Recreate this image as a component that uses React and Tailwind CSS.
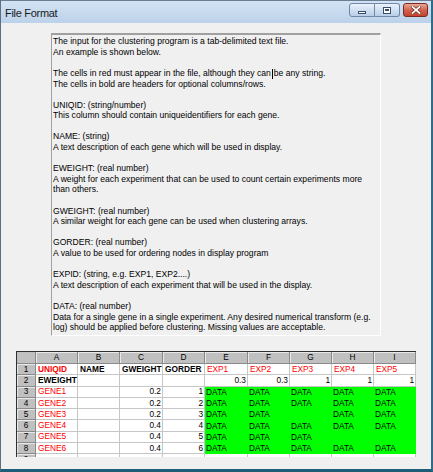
import React from "react";

const paragraphs = [
  ["The input for the clustering program is a tab-delimited text file.", "An example is shown below."],
  ["CURSOR", "The cells in bold are headers for optional columns/rows."],
  ["UNIQID: (string/number)", "This column should contain uniqueidentifiers for each gene."],
  ["NAME: (string)", "A text description of each gene which will be used in display."],
  ["EWEIGHT: (real number)", "A weight for each experiment that can be used to count certain experiments more", "than others."],
  ["GWEIGHT: (real number)", "A similar weight for each gene can be used when clustering arrays."],
  ["GORDER: (real number)", "A value to be used for ordering nodes in display program"],
  ["EXPID: (string, e.g. EXP1, EXP2....)", "A text description of each experiment that will be used in the display."],
  ["DATA: (real number)", "Data for a single gene in a single experiment. Any desired numerical transform (e.g.", "log) should be applied before clustering. Missing values are acceptable."],
];

const cols = ["A", "B", "C", "D", "E", "F", "G", "H", "I"];

// each cell: [text, kind] kind: r = red, rb = red bold, b = bold, n = number, d = data (green)
const rows = [
  [["UNIQID", "rb"], ["NAME", "b"], ["GWEIGHT", "b"], ["GORDER", "b"], ["EXP1", "r"], ["EXP2", "r"], ["EXP3", "r"], ["EXP4", "r"], ["EXP5", "r"]],
  [["EWEIGHT", "b"], ["", ""], ["", ""], ["", ""], ["0.3", "n"], ["0.3", "n"], ["1", "n"], ["1", "n"], ["1", "n"]],
  [["GENE1", "r"], ["", ""], ["0.2", "n"], ["1", "n"], ["DATA", "d"], ["DATA", "d"], ["DATA", "d"], ["DATA", "d"], ["DATA", "d"]],
  [["GENE2", "r"], ["", ""], ["0.2", "n"], ["2", "n"], ["DATA", "d"], ["DATA", "d"], ["DATA", "d"], ["DATA", "d"], ["DATA", "d"]],
  [["GENE3", "r"], ["", ""], ["0.2", "n"], ["3", "n"], ["DATA", "d"], ["DATA", "d"], ["", "d"], ["DATA", "d"], ["DATA", "d"]],
  [["GENE4", "r"], ["", ""], ["0.4", "n"], ["4", "n"], ["DATA", "d"], ["DATA", "d"], ["DATA", "d"], ["DATA", "d"], ["DATA", "d"]],
  [["GENE5", "r"], ["", ""], ["0.4", "n"], ["5", "n"], ["DATA", "d"], ["DATA", "d"], ["DATA", "d"], ["", "d"], ["", "d"]],
  [["GENE6", "r"], ["", ""], ["0.4", "n"], ["6", "n"], ["DATA", "d"], ["DATA", "d"], ["DATA", "d"], ["DATA", "d"], ["DATA", "d"]],
  [["", ""], ["", ""], ["", ""], ["", ""], ["", ""], ["", ""], ["", ""], ["", ""], ["", ""]],
];

function cellClass(kind) {
  if (kind === "d") return "bg-[#00ff00] text-black justify-start pl-[1px]";
  let c = "bg-white border-r border-b border-[#c6c6c6] ";
  if (kind === "n") return c + "justify-end pr-[1px] text-black";
  if (kind === "rb") return c + "justify-start pl-[2px] text-[#ff0000] font-bold";
  if (kind === "r") return c + "justify-start pl-[2px] text-[#ff0000]";
  if (kind === "b") return c + "justify-start pl-[2px] text-black font-bold";
  return c;
}

function Sheet() {
  return (
    <div className="ml-[15px] mt-[15px] w-[400px] h-[106px] overflow-hidden border-t border-l border-[#303030] bg-[#f0f0f0]">
      <div className="grid grid-cols-[19px_42px_42px_43px_42px_43px_42px_42px_42px_42px] grid-rows-[12px_repeat(9,11.25px)] text-[8.3px] leading-none font-['Liberation_Sans',Arial,sans-serif]">
        <div className="bg-[#c0c0c0] border-r border-b border-[#8a8a8a]"></div>
        {cols.map((c) => (
          <div key={c} className="bg-[#c0c0c0] border-r border-b border-[#8a8a8a] shadow-[inset_1px_1px_0_#e8e8e8] flex items-center justify-center text-black">
            {c}
          </div>
        ))}
        {rows.map((row, i) => (
          <React.Fragment key={i}>
            <div className="bg-[#c0c0c0] border-r border-b border-[#8a8a8a] shadow-[inset_1px_1px_0_#e8e8e8] flex items-center justify-center text-black">
              {i + 1}
            </div>
            {row.map(([t, k], j) => (
              <div key={j} className={"flex items-center whitespace-nowrap " + cellClass(k)}>
                {t}
              </div>
            ))}
          </React.Fragment>
        ))}
      </div>
    </div>
  );
}

function TitleBar() {
  return (
    <div className="h-[23px] flex items-start bg-gradient-to-b from-[#d3e3f4] to-[#bcd2ea] border-t border-[#6a7d92]">
      <div className="pl-[4px] pt-[4px] text-[11px] tracking-[-0.3px] text-[#1a1a1a] font-['Liberation_Sans',Arial,sans-serif]">
        File Format
      </div>
      <div className="ml-auto flex pt-[2px] pr-[3px]">
        <div className="w-[26px] h-[14px] rounded-l-[3px] border border-[#6f88a8] bg-gradient-to-b from-[#eaf2fb] to-[#b9cde6] flex items-end justify-center pb-[2px]">
          <div className="w-[8px] h-[3px] bg-white border border-[#39506c]"></div>
        </div>
        <div className="w-[25px] h-[14px] rounded-r-[3px] border border-l-0 border-[#6f88a8] bg-gradient-to-b from-[#eaf2fb] to-[#b9cde6] flex items-center justify-center">
          <div className="w-[8px] h-[7px] bg-white border border-[#39506c] flex items-center justify-center">
            <div className="w-[4px] h-[2px] border border-[#39506c]"></div>
          </div>
        </div>
        <div className="ml-[3px] w-[25px] h-[14px] rounded-[3px] border border-[#7a2c22] bg-gradient-to-b from-[#e9a796] via-[#d2634f] to-[#c2432f] flex items-center justify-center">
          <svg width="10" height="8" viewBox="0 0 10 8">
            <path d="M1.5 1 L8.5 7 M8.5 1 L1.5 7" stroke="#5a1f16" strokeWidth="3" strokeLinecap="square" />
            <path d="M1.5 1 L8.5 7 M8.5 1 L1.5 7" stroke="#ffffff" strokeWidth="1.8" strokeLinecap="square" />
          </svg>
        </div>
      </div>
    </div>
  );
}

export default function App() {
  return (
    <div className="w-[433px] h-[472px] flex flex-col bg-[#f0f0f0] border-l border-[#5d6e82] border-r-2 border-r-[#2a6e8c] border-b-[3px] border-b-[#1d5d78] overflow-hidden">
      <TitleBar />
      <div className="flex-1 flex flex-col">
        <div className="ml-[50px] mt-[10px] w-[330px] h-[303px] border-t-2 border-t-[#a0a0a0] border-l border-l-[#a0a0a0] border-r border-r-white border-b border-b-white pl-[1px] pt-[1px] text-[8.6px] leading-[10.6px] text-black font-['Liberation_Sans',Arial,sans-serif]">
          {paragraphs.map((p, i) => (
            <div key={i} className={i > 0 ? "mt-[10.6px]" : ""}>
              {p.map((line, j) =>
                line === "CURSOR" ? (
                  <div key={j} className="whitespace-nowrap">
                    The cells in red must appear in the file, although they can
                    <span className="inline-block w-px h-[10px] bg-black align-middle mx-[1px]"></span>
                    be any string.
                  </div>
                ) : (
                  <div key={j} className="whitespace-nowrap">{line}</div>
                )
              )}
            </div>
          ))}
        </div>
        <Sheet />
      </div>
    </div>
  );
}
